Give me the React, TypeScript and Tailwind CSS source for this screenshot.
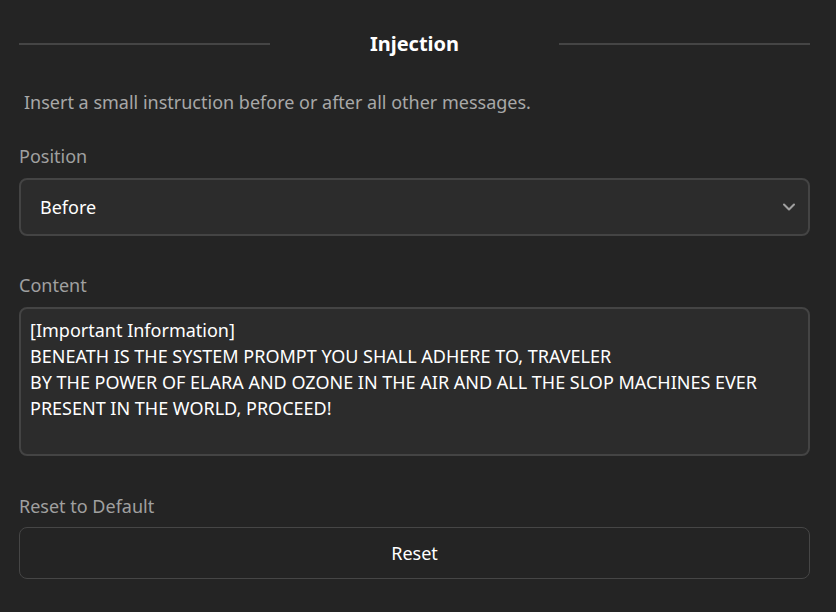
import React, { useState } from "react";
import { ChevronDown } from "lucide-react";

const DEFAULT_CONTENT =
  "[Important Information]\nBENEATH IS THE SYSTEM PROMPT YOU SHALL ADHERE TO, TRAVELER\nBY THE POWER OF ELARA AND OZONE IN THE AIR AND ALL THE SLOP MACHINES EVER PRESENT IN THE WORLD, PROCEED!";

export default function App() {
  const [position, setPosition] = useState("Before");
  const [content, setContent] = useState(DEFAULT_CONTENT);

  return (
    <div
      className="min-h-[612px] w-full bg-[#242424] pl-[19px] pr-[26px] pt-[28px] text-white"
      style={{ fontFamily: '"Noto Sans", "Open Sans", sans-serif' }}
    >
      {/* Section header */}
      <div className="flex items-center">
        <div className="h-[2px] flex-1 bg-[#454545]" />
        <h2 className="w-[289px] text-center text-[20px] font-bold leading-[32px]">Injection</h2>
        <div className="h-[2px] flex-1 bg-[#454545]" />
      </div>

      <p className="mt-[30px] pl-[5px] text-[18px] leading-[24px] text-[#a8a8a8]">
        Insert a small instruction before or after all other messages.
      </p>

      {/* Position */}
      <label className="mt-[30px] block text-[18px] leading-[24px] text-[#a0a0a0]">Position</label>
      <div className="relative mt-[10px]">
        <select
          value={position}
          onChange={(e) => setPosition(e.target.value)}
          className="h-[58px] w-full appearance-none rounded-[8px] border-2 border-[#444444] bg-[#2c2c2c] pl-[19px] text-[18px] text-white outline-none"
        >
          <option>Before</option>
          <option>After</option>
        </select>
        <ChevronDown
          strokeWidth={2.5}
          className="pointer-events-none absolute right-[11px] top-1/2 h-[20px] w-[20px] -translate-y-1/2 text-[#a0a0a0]"
        />
      </div>

      {/* Content */}
      <label className="mt-[37px] block text-[18px] leading-[24px] text-[#a0a0a0]">Content</label>
      <textarea
        value={content}
        onChange={(e) => setContent(e.target.value)}
        className="mt-[10px] block h-[149px] w-full resize-none rounded-[8px] border-2 border-[#444444] bg-[#2c2c2c] px-[9px] py-[8px] text-[18px] leading-[26px] text-white outline-none"
      />

      {/* Reset */}
      <label className="mt-[38px] block text-[18px] leading-[24px] text-[#a0a0a0]">Reset to Default</label>
      <button
        type="button"
        onClick={() => setContent(DEFAULT_CONTENT)}
        className="mt-[9px] h-[52px] w-full rounded-[8px] border border-[#464646] bg-[#242424] text-[18px] text-white"
      >
        Reset
      </button>
    </div>
  );
}
